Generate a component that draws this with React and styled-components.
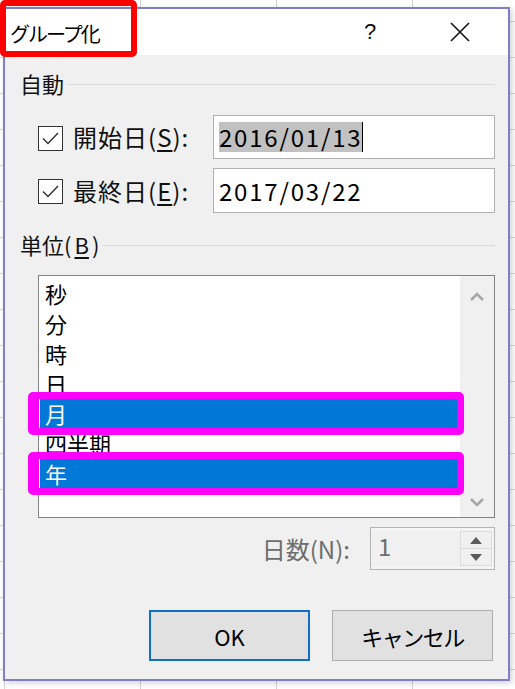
import styled, { createGlobalStyle } from 'styled-components'

const font = `"Noto Sans CJK JP", "Noto Sans", sans-serif`

const Global = createGlobalStyle`
  html, body {
    margin: 0;
    padding: 0;
  }
  body {
    width: 515px;
    height: 689px;
    overflow: hidden;
    font-family: ${font};
    background-color: #ffffff;
    background-image:
      linear-gradient(to right, #d4d4d4 1px, transparent 1px),
      linear-gradient(to bottom, #d4d4d4 1px, transparent 1px);
    background-size: 136px 36px;
    background-position: 4px 21px;
  }
`

const Page = styled.div`
  padding: 7px 0 0 3px;
  position: relative;
`

const Dialog = styled.div`
  width: 503px;
  height: 670px;
  border: 2px solid #7f7fc9;
  background: #f0f0f0;
  box-shadow: 2px 2px 6px rgba(0, 0, 0, 0.18);
  display: flex;
  flex-direction: column;
`

const TitleBar = styled.div`
  height: 46px;
  background: #ffffff;
  display: flex;
  align-items: center;
  padding-left: 5px;
`

const Title = styled.div`
  font-size: 20px;
  letter-spacing: -2px;
  color: #000;
  flex: 1;
  margin-top: 2px;
`

const TitleButton = styled.div`
  width: 90px;
  display: flex;
  justify-content: center;
  font-size: 22px;
  color: #111;
  font-family: "Liberation Sans", sans-serif;
`

const RedMark = styled.div`
  position: absolute;
  left: 0;
  top: 0;
  width: 137px;
  height: 57px;
  box-sizing: border-box;
  border: 6px solid #ff0000;
  border-radius: 5px;
`

const Body = styled.div`
  flex: 1;
  padding: 13px 13px 0 15px;
  display: flex;
  flex-direction: column;
`

const GroupHeader = styled.div`
  display: flex;
  align-items: center;
  font-size: 22px;
  line-height: 30px;
  color: #111;
  gap: 3px;
  margin-top: ${p => p.$mt || 0}px;
  u {
    text-decoration-thickness: 2px;
    text-underline-offset: 3px;
  }
  &::after {
    content: '';
    flex: 1;
    height: 1px;
    background: #dadada;
    margin-top: 2px;
  }
`

const DateRow = styled.div`
  display: flex;
  align-items: center;
  padding-left: 18px;
  margin-top: ${p => p.$mt}px;
`

const Check = styled.div`
  width: 23px;
  height: 23px;
  border: 1px solid #333;
  background: #fff;
  display: flex;
  align-items: center;
  justify-content: center;
  margin-top: 2px;
`

const Label = styled.div`
  font-size: 24px;
  line-height: 30px;
  color: ${p => (p.$dim ? '#6d6d6d' : '#111')};
  width: ${p => (p.$w ? `${p.$w}px` : 'auto')};
  margin-left: ${p => p.$ml || 0}px;
  letter-spacing: ${p => (p.$dim ? '0' : '1px')};
  u {
    text-decoration-thickness: 2px;
    text-underline-offset: 3px;
  }
`

const TextBox = styled.div`
  height: ${p => p.$h}px;
  border: 1px solid #b0b0b0;
  background: #fff;
  display: flex;
  align-items: center;
  padding-left: 5px;
  box-sizing: border-box;
  width: 282px;
  font-size: 24px;
  letter-spacing: 1.8px;
  color: #000;
`

const Selected = styled.span`
  background: #c1c1c1;
  border-right: 1px solid #000;
  line-height: 30px;
`

const ListBox = styled.div`
  margin: 16px 0 0 18px;
  height: 243px;
  border: 1px solid #828282;
  background: #fff;
  box-sizing: border-box;
  display: flex;
`

const Items = styled.div`
  flex: 1;
  padding-top: 2px;
  display: flex;
  flex-direction: column;
`

const Item = styled.div`
  position: relative;
  height: 30px;
  line-height: 30px;
  padding-left: 5px;
  font-size: 22px;
  color: ${p => (p.$sel ? '#fff' : '#000')};
  background: ${p => (p.$sel ? '#0078d7' : 'transparent')};
  border-left: 1px solid ${p => (p.$sel ? '#fff' : 'transparent')};
`

const PinkMark = styled.div`
  position: absolute;
  left: -12px;
  right: -4px;
  top: -6px;
  bottom: -7px;
  border: 7px solid #ff00ff;
  border-left-width: 11px;
  border-radius: 5px;
  z-index: 2;
`

const ScrollBar = styled.div`
  width: 34px;
  background: #f0f0f0;
  display: flex;
  flex-direction: column;
  justify-content: space-between;
  align-items: center;
  padding: 16px 0 10px;
`

const SpinRow = styled.div`
  display: flex;
  justify-content: flex-end;
  align-items: center;
  gap: 20px;
  margin-top: 9px;
`

const SpinBox = styled.div`
  width: 125px;
  height: 43px;
  border: 1px solid #b4b4b4;
  box-sizing: border-box;
  background: #f4f4f4;
  display: flex;
  padding: 3px 2px 3px 0;
`

const SpinValue = styled.div`
  flex: 1;
  font-size: 24px;
  line-height: 30px;
  color: #6d6d6d;
  padding-left: 7px;
  background: #f0f0f0;
`

const SpinButtons = styled.div`
  width: 32px;
  display: flex;
  flex-direction: column;
`

const SpinButton = styled.div`
  flex: 1;
  border: 1px solid #dcdcdc;
  background: #f0f0f0;
  display: flex;
  align-items: center;
  justify-content: center;
  & + & {
    border-top: none;
  }
`

const Buttons = styled.div`
  display: flex;
  justify-content: flex-end;
  gap: 22px;
  margin-top: 40px;
  padding-right: 2px;
`

const Button = styled.div`
  width: 161px;
  height: 51px;
  box-sizing: border-box;
  background: #e1e1e1;
  border: ${p => (p.$primary ? '2px solid #0f6fc6' : '1px solid #adadad')};
  display: flex;
  align-items: center;
  justify-content: center;
  font-size: 22px;
  color: #000;
  letter-spacing: ${p => (p.$primary ? '0' : '-1.5px')};
`

const Chevron = ({ up }) => (
  <svg width="16" height="10" viewBox="0 0 16 10">
    <path
      d={up ? 'M2 8 L8 2 L14 8' : 'M2 2 L8 8 L14 2'}
      fill="none"
      stroke="#a6a6a6"
      strokeWidth="2.5"
    />
  </svg>
)

const Tri = ({ up }) => (
  <svg width="12" height="7" viewBox="0 0 12 7">
    <path d={up ? 'M0 7 L6 0 L12 7 Z' : 'M0 0 L6 7 L12 0 Z'} fill="#5c5c5c" />
  </svg>
)

const Tick = () => (
  <svg width="17" height="13" viewBox="0 0 17 13">
    <path d="M1 6.5 L6 11.5 L16 1" fill="none" stroke="#333" strokeWidth="1.5" />
  </svg>
)

const units = [
  { t: '秒' },
  { t: '分' },
  { t: '時' },
  { t: '日' },
  { t: '月', sel: true },
  { t: '四半期' },
  { t: '年', sel: true },
]

export default function App() {
  return (
    <Page>
      <Global />
      <Dialog>
        <TitleBar>
          <Title>グループ化</Title>
          <TitleButton>?</TitleButton>
          <TitleButton>
            <svg width="20" height="20" viewBox="0 0 20 20">
              <path d="M1 1 L19 19 M19 1 L1 19" stroke="#111" strokeWidth="1.6" />
            </svg>
          </TitleButton>
          <div style={{ width: 3 }} />
        </TitleBar>
        <Body>
          <GroupHeader>自動</GroupHeader>
          <DateRow $mt={17}>
            <Check><Tick /></Check>
            <Label $w={140} $ml={10}>開始日(<u>S</u>):</Label>
            <TextBox $h={44}>
              <Selected>2016/01/13</Selected>
            </TextBox>
          </DateRow>
          <DateRow $mt={9}>
            <Check><Tick /></Check>
            <Label $w={140} $ml={10}>最終日(<u>E</u>):</Label>
            <TextBox $h={45}>2017/03/22</TextBox>
          </DateRow>
          <GroupHeader $mt={16}>単位(<u>B</u>)</GroupHeader>
          <ListBox>
            <Items>
              {units.map(u => (
                <Item key={u.t} $sel={u.sel}>
                  {u.t}
                  {u.sel && <PinkMark />}
                </Item>
              ))}
            </Items>
            <ScrollBar>
              <Chevron up />
              <Chevron />
            </ScrollBar>
          </ListBox>
          <SpinRow>
            <Label $dim>日数(N):</Label>
            <SpinBox>
              <SpinValue>1</SpinValue>
              <SpinButtons>
                <SpinButton><Tri up /></SpinButton>
                <SpinButton><Tri /></SpinButton>
              </SpinButtons>
            </SpinBox>
          </SpinRow>
          <Buttons>
            <Button $primary>OK</Button>
            <Button>キャンセル</Button>
          </Buttons>
        </Body>
      </Dialog>
      <RedMark />
    </Page>
  )
}
